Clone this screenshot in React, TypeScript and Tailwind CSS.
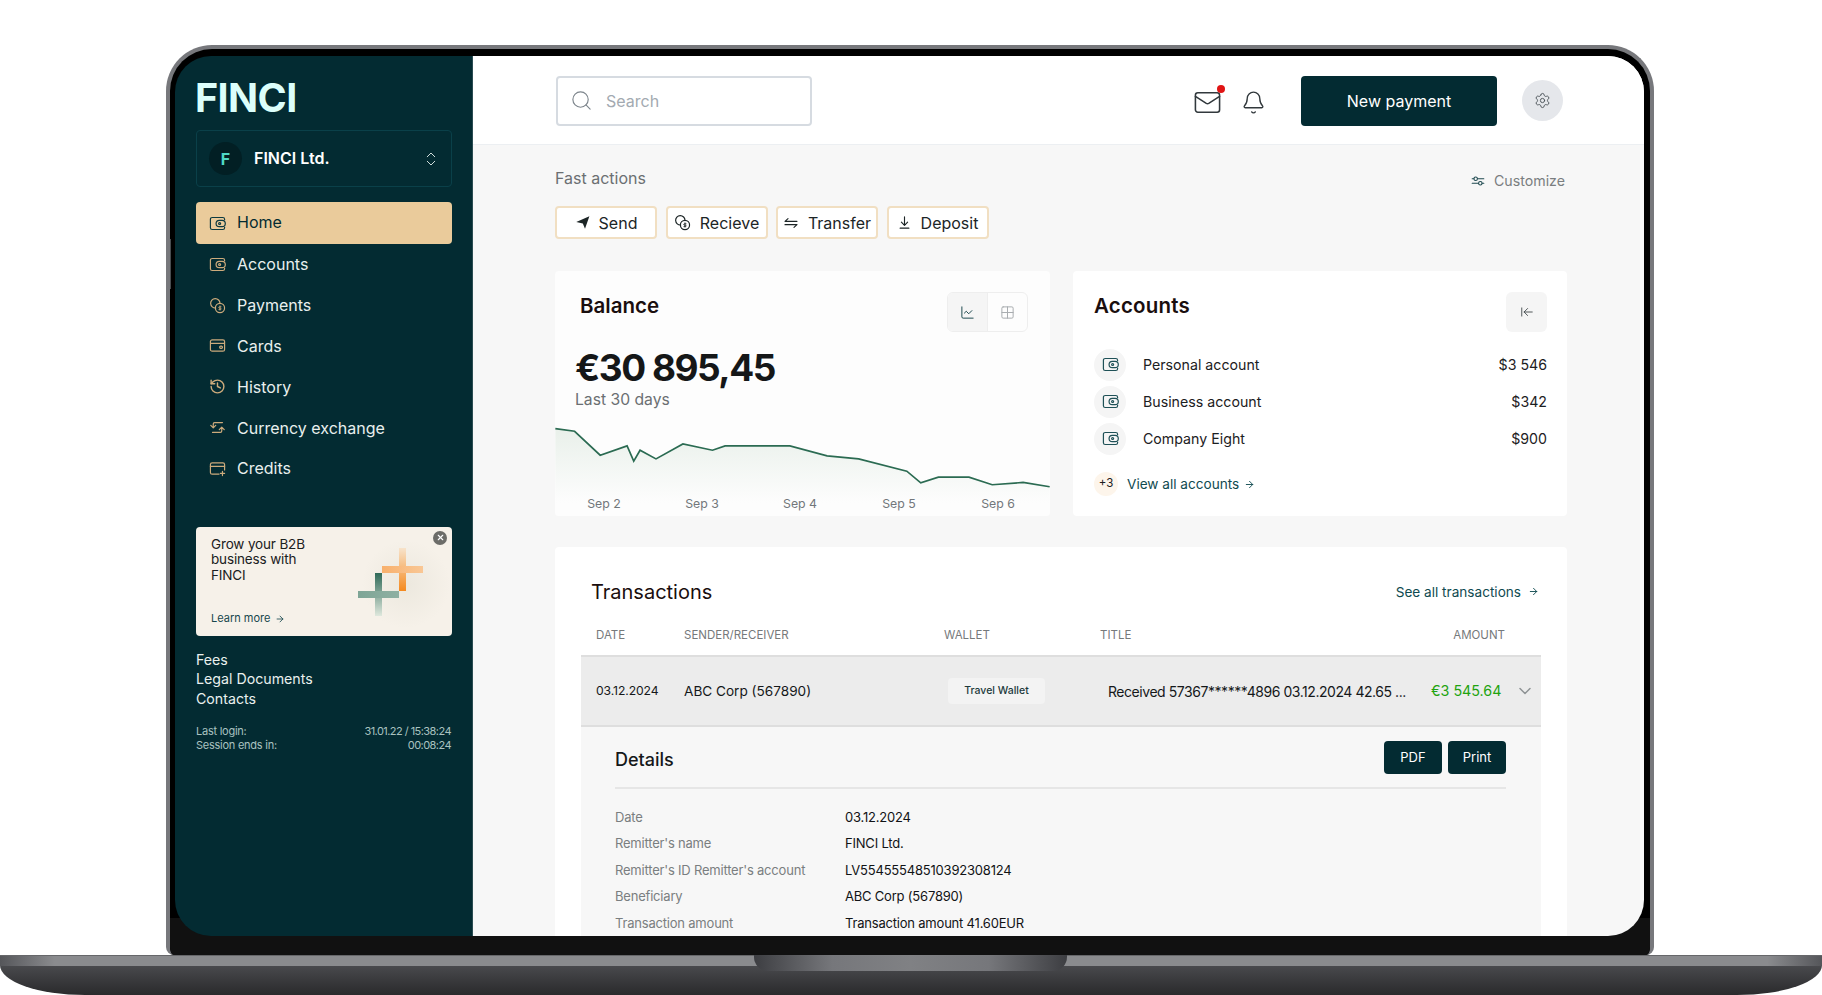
import { ArrowLeftToLine, ArrowRight, Bell, ChartLine, ChevronDown, ChevronsUpDown, Grid2x2, History, Mail, Search, Settings, X } from 'lucide-react';

type IconProps = { className?: string };

function WalletIcon({ className }: IconProps) {
  return (
    <svg viewBox="0 0 24 24" fill="none" stroke="currentColor" strokeWidth="1.7" className={className}>
      <path d="M22 7.5V6a2.5 2.5 0 0 0-2.5-2.5h-15A2.5 2.5 0 0 0 2 6v12a2.5 2.5 0 0 0 2.5 2.5h15A2.5 2.5 0 0 0 22 18v-1.5" />
      <rect x="10" y="7.5" width="13" height="9" rx="4.5" />
      <circle cx="15" cy="12" r="1.4" />
    </svg>
  );
}

function CoinsIcon({ className }: IconProps) {
  return (
    <svg viewBox="0 0 24 24" fill="none" stroke="currentColor" strokeWidth="1.7" strokeLinecap="round" className={className}>
      <path d="M9.5 15.5A6.6 6.6 0 1 1 15.5 9" />
      <circle cx="15.5" cy="15.5" r="6.5" />
      <path d="M15.5 12.5v6M17 13.8h-2.2a1 1 0 0 0 0 2h1.4a1 1 0 0 1 0 2H14" strokeWidth="1.2" />
    </svg>
  );
}

function CardIcon({ className }: IconProps) {
  return (
    <svg viewBox="0 0 24 24" fill="none" stroke="currentColor" strokeWidth="1.7" className={className}>
      <rect x="2" y="4" width="20" height="16" rx="2.5" />
      <path d="M2 9h20" />
      <rect x="15" y="13" width="4" height="3" rx="1.5" />
    </svg>
  );
}

function CreditIcon({ className }: IconProps) {
  return (
    <svg viewBox="0 0 24 24" fill="none" stroke="currentColor" strokeWidth="1.7" strokeLinecap="round" className={className}>
      <path d="M14 20H4.5A2.5 2.5 0 0 1 2 17.5v-11A2.5 2.5 0 0 1 4.5 4h15A2.5 2.5 0 0 1 22 6.5V14" />
      <path d="M2 9h20M19 16v6M16 19h6" />
    </svg>
  );
}

function ExchangeIcon({ className }: IconProps) {
  return (
    <svg viewBox="0 0 24 24" fill="none" stroke="currentColor" strokeWidth="1.7" strokeLinecap="round" strokeLinejoin="round" className={className}>
      <path d="M6 12V7a2 2 0 0 1 2-2h11M2.5 9 6 12.5 9.5 9M18 12v5a2 2 0 0 1-2 2H5M14.5 15 18 11.5 21.5 15" />
    </svg>
  );
}

function TransferIcon({ className }: IconProps) {
  return (
    <svg viewBox="0 0 24 24" fill="none" stroke="currentColor" strokeWidth="1.7" strokeLinecap="round" strokeLinejoin="round" className={className}>
      <path d="M21 9.5H3l4.5-4M3 14.5h18l-4.5 4" />
    </svg>
  );
}

function DepositIcon({ className }: IconProps) {
  return (
    <svg viewBox="0 0 24 24" fill="none" stroke="currentColor" strokeWidth="1.8" strokeLinecap="round" strokeLinejoin="round" className={className}>
      <path d="M12 3v13M7 11.5l5 5 5-5M5 21h14" />
    </svg>
  );
}

function SlidersIcon({ className }: IconProps) {
  return (
    <svg viewBox="0 0 24 24" fill="none" stroke="currentColor" strokeWidth="1.8" strokeLinecap="round" className={className}>
      <path d="M2 8h3M11 8h11M2 16h11M19 16h3" />
      <circle cx="8" cy="8" r="3" />
      <circle cx="16" cy="16" r="3" />
    </svg>
  );
}

function PromoCrosses() {
  return (
    <svg width="110" height="110" viewBox="0 0 110 110" className="absolute left-[155px] top-[2px]">
      <defs>
        <radialGradient id="halo">
          <stop offset="0%" stopColor="#ece8de" />
          <stop offset="100%" stopColor="#f6f1e9" />
        </radialGradient>
        <linearGradient id="orangeV" x1="0" y1="0" x2="0" y2="1">
          <stop offset="0%" stopColor="#f7e3cb" />
          <stop offset="100%" stopColor="#f58a1f" />
        </linearGradient>
        <linearGradient id="orangeH" x1="0" y1="0" x2="1" y2="0">
          <stop offset="0%" stopColor="#f8b06c" />
          <stop offset="100%" stopColor="#f9c795" />
        </linearGradient>
        <linearGradient id="greenV" x1="0" y1="0" x2="0" y2="1">
          <stop offset="0%" stopColor="#2f6a58" />
          <stop offset="100%" stopColor="#dfe8dd" />
        </linearGradient>
        <linearGradient id="greenH" x1="0" y1="0" x2="1" y2="0">
          <stop offset="0%" stopColor="#7ea596" />
          <stop offset="100%" stopColor="#8fb0a2" />
        </linearGradient>
      </defs>
      <circle cx="55" cy="55" r="44" fill="url(#halo)" />
      <rect x="48" y="19" width="7" height="43" fill="url(#orangeV)" />
      <rect x="31" y="37" width="41" height="7" fill="url(#orangeH)" />
      <rect x="24" y="44" width="7" height="43" fill="url(#greenV)" />
      <rect x="7" y="62" width="41" height="7" fill="url(#greenH)" />
    </svg>
  );
}

const NAV = [
  { label: 'Accounts', icon: WalletIcon },
  { label: 'Payments', icon: CoinsIcon },
  { label: 'Cards', icon: CardIcon },
  { label: 'History', icon: History },
  { label: 'Currency exchange', icon: ExchangeIcon },
  { label: 'Credits', icon: CreditIcon },
];

function Sidebar() {
  return (
    <aside className="w-[297px] shrink-0 bg-[#032b32] px-[21px] pt-[24px]">
      <div className="-ml-[1px] h-[36px] text-[39.5px] leading-[36px] font-bold tracking-[-0.6px] text-[#dcfffb]">FINCI</div>

      <div className="mt-[14px] flex h-[57px] w-[256px] items-center rounded-[4px] border border-[#0a4049] pl-[12px] pr-[11px]">
        <div className="flex h-[33px] w-[33px] items-center justify-center rounded-full bg-[#021f24] text-[16px] font-bold text-[#4fd9c6]">F</div>
        <span className="mb-[2px] ml-[12px] text-[16px] font-semibold text-white">FINCI Ltd.</span>
        <ChevronsUpDown className="ml-auto h-[18px] w-[18px] text-[#d6e2e0]" strokeWidth={1.3} />
      </div>

      <nav className="mt-[15px] w-[256px]">
        <div className="flex h-[42px] items-center rounded-[4px] bg-[#eacb9b] pl-[13px] text-[16px] text-[#032b32]">
          <WalletIcon className="h-[17px] w-[17px] text-[#0d3a40]" />
          <span className="mb-[2px] ml-[11px]">Home</span>
        </div>
        {NAV.map((item) => (
          <div key={item.label} className="flex h-[40.8px] items-center pl-[13px] text-[16px] text-[#e9f0ee]">
            <item.icon className="h-[17px] w-[17px] text-[#cdab7c]" />
            <span className="ml-[11px]">{item.label}</span>
          </div>
        ))}
      </nav>

      <div className="relative mt-[38px] h-[109px] w-[256px] rounded-[4px] bg-[#f6f1e9] pl-[15px] pt-[10px]">
        <PromoCrosses />
        <p className="relative w-[110px] text-[13.5px] leading-[15.5px] tracking-[-0.15px] text-[#1a2021]">
          Grow your B2B business with FINCI
        </p>
        <div className="absolute bottom-[9px] left-[15px] flex items-center gap-[5px] text-[11px] text-[#17474d]">
          Learn more <ArrowRight className="h-[10px] w-[10px]" strokeWidth={2} />
        </div>
        <div className="absolute right-[5px] top-[4px] flex h-[14px] w-[14px] items-center justify-center rounded-full bg-[#6c6c68]">
          <X className="h-[9px] w-[9px] text-white" strokeWidth={3} />
        </div>
      </div>

      <div className="mt-[14px] text-[14.2px] leading-[19.5px] text-[#e9f0ee]">
        <div>Fees</div>
        <div>Legal Documents</div>
        <div>Contacts</div>
      </div>

      <div className="mt-[16px] flex justify-between text-[11px] leading-[14px] tracking-[-0.25px] text-[#a9c2c0]">
        <div>
          <div>Last login:</div>
          <div>Session ends in:</div>
        </div>
        <div className="text-right tracking-[-0.55px]">
          <div>31.01.22 / 15:38:24</div>
          <div>00:08:24</div>
        </div>
      </div>
    </aside>
  );
}

function Header() {
  return (
    <header className="flex h-[89px] shrink-0 items-center border-b border-[#eceff2] bg-white pl-[83px] pr-[81px] pt-[1px]">
      <div className="flex h-[50px] w-[256px] items-center rounded-[4px] border-2 border-[#d6dbe1] pl-[12px]">
        <Search className="h-[23px] w-[23px] text-[#7d858c]" strokeWidth={1.2} />
        <span className="ml-[13px] text-[16px] text-[#a3aab1]">Search</span>
      </div>
      <div className="relative ml-auto mt-[4px]">
        <Mail className="h-[29px] w-[29px] text-[#32393d]" strokeWidth={1.3} />
        <div className="absolute -right-[3px] -top-[3px] h-[8px] w-[8px] rounded-full bg-[#e01414]" />
      </div>
      <Bell className="ml-[19px] mt-[4px] h-[25px] w-[25px] text-[#32393d]" strokeWidth={1.3} />
      <button className="ml-[35px] h-[50px] w-[196px] rounded-[4px] bg-[#032b32] text-[16px] text-white">New payment</button>
      <div className="ml-[25px] flex h-[41px] w-[41px] items-center justify-center rounded-full bg-[#e5e7eb]">
        <Settings className="h-[17px] w-[17px] text-[#4a5257]" strokeWidth={1.3} />
      </div>
    </header>
  );
}

const ACTIONS = [
  { label: 'Send', icon: <svg viewBox="0 0 24 24" fill="currentColor" className="h-[15px] w-[15px]"><path d="M2 11 23 2l-7 20-3.5-8.5z" /></svg> },
  { label: 'Recieve', icon: <CoinsIcon className="h-[17px] w-[17px]" /> },
  { label: 'Transfer', icon: <TransferIcon className="h-[16px] w-[16px]" /> },
  { label: 'Deposit', icon: <DepositIcon className="h-[15px] w-[15px]" /> },
];

const LINE = '72,1135 130,1143 207,1215 288,1187 308,1233 327,1200 375,1226 456,1181 545,1200 583,1187 778,1187 890,1217 985,1226 1130,1263 1172,1298 1225,1281 1317,1281 1387,1304 1480,1297 1560,1310';

function BalanceCard() {
  return (
    <section className="relative h-[245px] w-[495px] overflow-hidden rounded-[4px] bg-[#fdfdfd]">
      <div className="flex items-start justify-between pl-[25px] pr-[22px] pt-[21px]">
        <h2 className="text-[20.5px] font-semibold leading-[28px] text-[#1a0e0e]">Balance</h2>
        <div className="flex h-[40px] w-[81px] overflow-hidden rounded-[6px] border border-[#eeeeee]">
          <div className="flex w-[40px] items-center justify-center border-r border-[#eeeeee] bg-[#f5f5f5]">
            <ChartLine className="h-[15px] w-[15px] text-[#1f4a50]" strokeWidth={1.6} />
          </div>
          <div className="flex flex-1 items-center justify-center">
            <Grid2x2 className="h-[15px] w-[15px] text-[#a9adb0]" strokeWidth={1.6} />
          </div>
        </div>
      </div>
      <div className="ml-[20px] mt-[14px] text-[37px] font-bold leading-[44px] tracking-[-1.5px] text-[#151718]">€30 895,45</div>
      <div className="ml-[20px] -mt-[2px] text-[15.7px] leading-[24px] text-[#6b6f72]">Last 30 days</div>
      <div className="relative mt-[5px]">
        <svg width="495" height="99" viewBox="72 1100 1488 298" className="block">
          <defs>
            <linearGradient id="area" x1="0" y1="0" x2="0" y2="1">
              <stop offset="0%" stopColor="#e9f0ea" />
              <stop offset="85%" stopColor="#fdfdfd" />
            </linearGradient>
          </defs>
          <polygon points={`72,1398 ${LINE} 1560,1398`} fill="url(#area)" />
          <polyline points={LINE} fill="none" stroke="#2b6b52" strokeWidth="5" />
        </svg>
        {[
          ['Sep 2', 49],
          ['Sep 3', 147],
          ['Sep 4', 245],
          ['Sep 5', 344],
          ['Sep 6', 443],
        ].map(([label, x]) => (
          <span key={label} className="absolute bottom-[3px] w-[60px] -translate-x-1/2 text-center text-[12.3px] text-[#72777b]" style={{ left: x as number }}>
            {label}
          </span>
        ))}
      </div>
    </section>
  );
}

const ACCOUNTS = [
  ['Personal account', '$3 546'],
  ['Business account', '$342'],
  ['Company Eight', '$900'],
];

function AccountsCard() {
  return (
    <section className="h-[245px] w-[494px] rounded-[4px] bg-white pl-[21px] pr-[20px] pt-[21px]">
      <div className="flex items-start justify-between">
        <h2 className="text-[20.5px] font-semibold leading-[28px] tracking-[0.2px] text-[#1a0e0e]">Accounts</h2>
        <div className="flex h-[40px] w-[41px] items-center justify-center rounded-[6px] bg-[#f5f5f5]">
          <ArrowLeftToLine className="h-[14px] w-[14px] text-[#3c4346]" strokeWidth={1.5} />
        </div>
      </div>
      <div className="mt-[14px]">
        {ACCOUNTS.map(([name, value]) => (
          <div key={name} className="flex h-[37px] items-center text-[14.2px] text-[#1c2022]">
            <div className="flex h-[32px] w-[32px] items-center justify-center rounded-full bg-[#f5f5f5]">
              <WalletIcon className="h-[17px] w-[17px] text-[#1f5157]" />
            </div>
            <span className="ml-[17px]">{name}</span>
            <span className="ml-auto">{value}</span>
          </div>
        ))}
      </div>
      <div className="mt-[15px] flex items-center">
        <div className="flex h-[24px] w-[24px] items-center justify-center rounded-full bg-[#fdf5eb] text-[11.5px] text-[#1c2022]">+3</div>
        <span className="ml-[9px] text-[13.6px] text-[#0f4a50]">View all accounts</span>
        <ArrowRight className="ml-[5px] h-[11px] w-[11px] text-[#0f4a50]" strokeWidth={2} />
      </div>
    </section>
  );
}

const DETAILS = [
  ['Date', '03.12.2024'],
  ["Remitter's name", 'FINCI Ltd.'],
  ["Remitter's ID Remitter's account", 'LV55455548510392308124'],
  ['Beneficiary', 'ABC Corp (567890)'],
  ['Transaction amount', 'Transaction amount 41.60EUR'],
];

function Transactions() {
  return (
    <section className="mt-[31px] rounded-[4px] bg-white px-[26px] pb-[20px] pt-[31px]">
      <div className="flex items-center justify-between pl-[10px] pr-[2px]">
        <h2 className="text-[20px] font-normal leading-[28px] text-[#1a0e0e]">Transactions</h2>
        <div className="flex items-center gap-[7px] text-[13.6px] text-[#0f4a50]">
          See all transactions <ArrowRight className="h-[11px] w-[11px]" strokeWidth={2} />
        </div>
      </div>

      <div className="mt-[21px] flex h-[28px] items-start pl-[15px] pr-[36px] text-[11.5px] leading-[16px] text-[#76797b]">
        <div className="w-[88px]">DATE</div>
        <div className="w-[260px]">SENDER/RECEIVER</div>
        <div className="w-[156px]">WALLET</div>
        <div>TITLE</div>
        <div className="ml-auto">AMOUNT</div>
      </div>

      <div className="flex h-[72px] items-center border-y-2 border-[#dedede] bg-[#ececec] pl-[15px] text-[#15181a]">
        <div className="w-[88px] text-[12.2px] tracking-[-0.1px]">03.12.2024</div>
        <div className="w-[264px] text-[13.6px]">ABC Corp (567890)</div>
        <div className="flex h-[26px] w-[97px] items-center justify-center rounded-[4px] bg-[#f3f3f3] text-[10.5px] font-medium text-[#1d3a3c]">Travel Wallet</div>
        <div className="ml-[63px] w-[298px] whitespace-nowrap text-[14px] tracking-[-0.45px]">Received 57367******4896 03.12.2024 42.65 ...</div>
        <div className="ml-[25px] text-[14.3px] text-[#22a30f]">€3 545.64</div>
        <ChevronDown className="ml-[14px] h-[20px] w-[20px] text-[#8f9395]" strokeWidth={1.8} />
      </div>

      <div className="bg-[#f7f7f7] pl-[34px] pr-[35px] pt-[14px]">
        <div className="flex items-center justify-between border-b-2 border-[#e6e6e6] pb-[13px]">
          <h3 className="mt-[3px] text-[18px] font-medium text-[#15181a]">Details</h3>
          <div className="flex gap-[6px]">
            <button className="h-[33px] w-[58px] rounded-[4px] bg-[#032b32] text-[13px] text-white">PDF</button>
            <button className="h-[33px] w-[58px] rounded-[4px] bg-[#032b32] text-[13px] text-white">Print</button>
          </div>
        </div>
        <div className="mt-[15px] pb-[30px]">
          {DETAILS.map(([label, value]) => (
            <div key={label} className="flex h-[26.6px] items-center text-[13px] tracking-[-0.2px]">
              <div className="w-[230px] text-[#7a7e80]">{label}</div>
              <div className="text-[#111315]">{value}</div>
            </div>
          ))}
        </div>
      </div>
    </section>
  );
}

function Main() {
  return (
    <main className="flex min-w-0 flex-1 flex-col bg-[#f7f7f7]">
      <Header />
      <div className="pl-[82px] pr-[77px] pt-[21px]">
        <div className="flex h-[24px] items-center justify-between">
          <span className="text-[16px] text-[#6b6f72]">Fast actions</span>
          <div className="mr-[2px] mt-[5px] flex items-center gap-[9px] text-[14.2px] text-[#7a7e80]">
            <SlidersIcon className="h-[14px] w-[14px] text-[#1f4a50]" />
            Customize
          </div>
        </div>
        <div className="mt-[16px] flex gap-[8.5px]">
          {ACTIONS.map((a) => (
            <div key={a.label} className="flex h-[33px] w-[102px] items-center justify-center gap-[9px] rounded-[4px] border-2 border-[#f1dfc2] bg-white text-[16px] text-[#1c2526]">
              {a.icon}
              <span>{a.label}</span>
            </div>
          ))}
        </div>
        <div className="mt-[32px] flex gap-[23px]">
          <BalanceCard />
          <AccountsCard />
        </div>
        <Transactions />
      </div>
    </main>
  );
}

export default function App() {
  return (
    <div className="relative h-[995px] w-[1822px] overflow-hidden bg-white font-[family-name:Inter,'Liberation_Sans',sans-serif]">
      <div className="relative ml-[166px] mt-[45px] h-[910px] w-[1488px] overflow-hidden rounded-b-[8px] rounded-t-[46px] border-x-4 border-t-4 border-[#77787c] bg-black pl-[5px] pr-[6px] pt-[7px]">
        <div className="absolute inset-x-0 bottom-0 h-[37px] bg-[#111111]" />
        <div className="absolute left-0 top-[190px] h-[50px] w-[1px] bg-[#4a4d50]" />
        <div className="relative flex h-[880px] overflow-hidden rounded-[36px]">
          <Sidebar />
          <div className="w-[1px] shrink-0 bg-[#2a4c52]" />
          <Main />
        </div>
      </div>

      <div className="relative h-[40px] overflow-hidden rounded-b-[85px_30px] bg-gradient-to-b from-[#55565a] to-[#2a2a2c]">
        <div className="h-[11px] border-t border-[#66676a] bg-[linear-gradient(to_right,#55565a,#8a8b8e_3%,#8a8b8e_97%,#55565a)]" />
        <div className="absolute left-[754px] top-0 h-[16px] w-[313px] rounded-b-[14px] bg-[linear-gradient(to_right,#3d3e42,#76777b_25%,#808184_50%,#76777b_75%,#3d3e42)]" />
      </div>
    </div>
  );
}
